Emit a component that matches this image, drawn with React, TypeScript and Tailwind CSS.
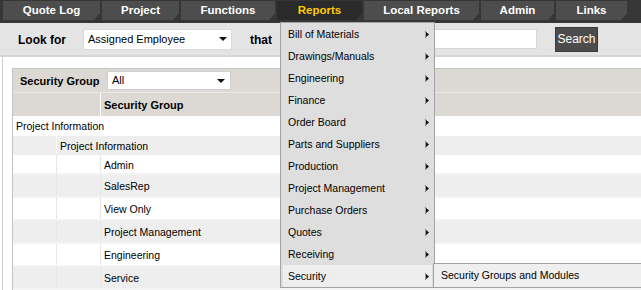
import React from "react";

const tabs = [
  { label: "Quote Log", w: 97 },
  { label: "Project", w: 77 },
  { label: "Functions", w: 94 },
  { label: "Reports", w: 85, active: true },
  { label: "Local Reports", w: 115 },
  { label: "Admin", w: 73 },
  { label: "Links", w: 71 },
];

const menuItems = [
  "Bill of Materials",
  "Drawings/Manuals",
  "Engineering",
  "Finance",
  "Order Board",
  "Parts and Suppliers",
  "Production",
  "Project Management",
  "Purchase Orders",
  "Quotes",
  "Receiving",
  "Security",
];

const groups = ["Admin", "SalesRep", "View Only", "Project Management", "Engineering", "Service"];

function Arrow() {
  return (
    <svg width="5" height="7" viewBox="0 0 5 7" className="absolute right-[2px] top-[8px]">
      <polygon points="0,0 4,3.5 0,7" fill="#111" />
      <line x1="0.5" y1="0.5" x2="0.5" y2="6.5" stroke="#d98a3a" strokeWidth="1" />
    </svg>
  );
}

function Caret() {
  return (
    <svg width="8" height="4" viewBox="0 0 8 4">
      <polygon points="0,0 8,0 4,4" fill="#111" />
    </svg>
  );
}

export default function App() {
  return (
    <div className="relative w-[641px] h-[290px] overflow-hidden bg-white font-['Liberation_Sans',Arial,sans-serif] text-black">
      {/* nav */}
      <div className="h-[23px] bg-[#363636] flex pl-[3px] gap-[2px] pt-[1px]">
        {tabs.map((t) => (
          <div
            key={t.label}
            style={{ width: t.w }}
            className={
              "h-[19px] flex items-center justify-center pt-[1px] text-[11.5px] font-bold [clip-path:polygon(0_0,100%_0,100%_65%,calc(100%_-_6px)_100%,0_100%)] " +
              (t.active ? "bg-[#2a2a2a] text-[#ffcc00]" : "bg-[#4d4d4d] text-white")
            }
          >
            {t.label}
          </div>
        ))}
      </div>

      {/* search bar */}
      <div className="h-[32px] bg-[#e4e4e4] flex items-center">
        <div className="w-[83px] pl-[18px] pt-[1px] text-[12px] font-bold">Look for</div>
        <div className="w-[149px] h-[21px] bg-white border border-[#dadada] flex items-center justify-between pl-[4px] pr-[4px] text-[11px]">
          <span>Assigned Employee</span>
          <Caret />
        </div>
        <div className="ml-[18px] pt-[1px] text-[12px] font-bold">that</div>
        <div className="ml-[28px] w-[237px] h-[20px] bg-white border border-[#d8d8d8]" />
        <div className="ml-[18px] w-[43px] h-[25px] bg-[#4c4c4c] border border-[#3a3a3a] flex items-center justify-center text-white text-[12px]">
          Search
        </div>
      </div>

      {/* content */}
      <div className="border-t-2 border-[#d6d6d6] h-[235px] pl-[2px]">
        <div className="border-l border-[#cfcfcf] h-full pl-[9px] pt-[11px]">
          <div className="border-l border-t border-[#c4c4c4]">
            {/* filter row */}
            <div className="h-[24px] bg-[#dcd9d4] flex items-center border-b border-[#ebe9e6]">
              <div className="w-[94px] pl-[7px] pt-[2px] text-[11px] font-bold">Security Group</div>
              <div className="w-[124px] h-[19px] bg-white border border-[#d0d0d0] flex items-center justify-between pl-[4px] pr-[5px] text-[11px]">
                <span>All</span>
                <Caret />
              </div>
            </div>
            {/* header */}
            <div className="h-[23px] bg-[#dcd9d4] flex">
              <div className="w-[88px] border-r border-white" />
              <div className="flex items-center pl-[3px] pt-[2px] text-[11px] font-bold">Security Group</div>
            </div>
            {/* PI rows */}
            <div className="h-[20px] bg-white flex items-center pl-[3px] pt-[2px] text-[10.5px]">Project Information</div>
            <div className="h-[19px] bg-[#eeeeee] flex text-[10.5px]">
              <div className="w-[44px] border-r border-[#fafafa]" />
              <div className="flex items-center pl-[3px] pt-[2px]">Project Information</div>
            </div>
            {groups.map((g, i) => (
              <div
                key={g}
                className={
                  "flex text-[10.5px] border-b-2 border-[#f3f3f3] " +
                  (i === 0 ? "h-[20px] " : "h-[23px] ") +
                  (i % 2 === 0 ? "bg-white" : "bg-[#eeeeee]")
                }
              >
                <div className="w-[44px] border-r border-[#e6e6e6]" />
                <div className="w-[44px] border-r border-[#e6e6e6]" />
                <div className="flex items-center pl-[3px] pt-[3px]">{g}</div>
              </div>
            ))}
          </div>
        </div>
      </div>

      {/* dropdown menu */}
      <div className="absolute left-[280px] top-[22px] w-[155px] bg-[#dedede] border border-[#a3a3a3] px-[2px]">
        {menuItems.map((m) => (
          <div
            key={m}
            className={
              "relative h-[22px] flex items-center pl-[5px] pt-[1px] text-[10.5px] " +
              (m === "Security" ? "bg-[#eeeeee]" : "")
            }
          >
            {m}
            <Arrow />
          </div>
        ))}
      </div>

      {/* submenu */}
      <div className="absolute left-[433px] top-[263px] w-[220px] h-[25px] bg-[#efefef] border border-[#a3a3a3] flex items-center pl-[7px] pt-[1px] text-[10.5px]">
        Security Groups and Modules
      </div>
    </div>
  );
}
